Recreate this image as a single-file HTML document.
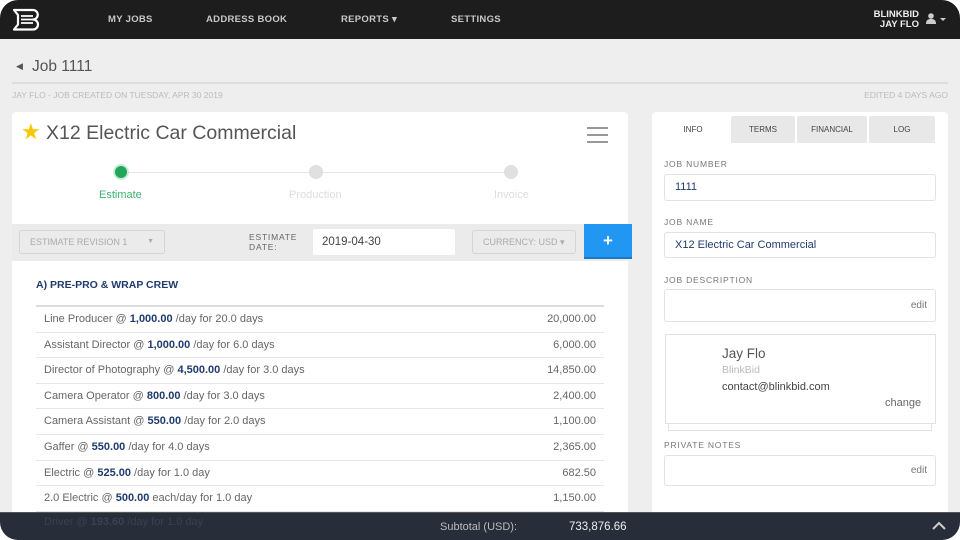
<!DOCTYPE html>
<html><head><meta charset="utf-8"><style>
*{margin:0;padding:0;box-sizing:border-box}
body{width:960px;height:540px;overflow:hidden;background:#fff;font-family:"Liberation Sans",sans-serif;position:relative}
.a{position:absolute}
#page{position:absolute;left:0;top:0;width:960px;height:540px;background:#eeeeee;border-radius:18px;overflow:hidden}
#top{left:0;top:0;width:960px;height:39px;background:#1d1d1d}
.nav{color:#c8c8c8;font-size:9.5px;font-weight:bold;letter-spacing:.3px;top:14px}
.lbl{font-size:8.5px;color:#777;letter-spacing:.8px}
.inp{background:#fff;border:1px solid #e2e2e2;border-radius:3px}
.row{left:36px;width:568px;height:25.6px;border-bottom:1px solid #e6e6e6;font-size:11px;color:#666;line-height:25px;padding-left:8px}
.row b{color:#1f3b6e}
.row span{position:absolute;right:8px}
.tab{top:116px;height:27px;background:#e8e8e8;font-size:8px;color:#444;text-align:center;line-height:27px;border-radius:2px 2px 0 0}
</style></head><body>
<div id="page">
<div class="a" id="top"></div>
<svg class="a" style="left:12px;top:8px" width="28" height="24" viewBox="0 0 28 24"><path d="M2 2h19a4.5 4.5 0 0 1 0 9.5a4.5 4.5 0 0 1 0 10H2l4-5V7z" fill="none" stroke="#fff" stroke-width="2.2" stroke-linejoin="round"/><path d="M9 8h12M9 11.5h12M9 15h12" stroke="#fff" stroke-width="1.8"/></svg>
<div class="a nav" style="left:108px">MY JOBS</div>
<div class="a nav" style="left:206px">ADDRESS BOOK</div>
<div class="a nav" style="left:341px">REPORTS ▾</div>
<div class="a nav" style="left:451px">SETTINGS</div>
<div class="a" style="right:41px;top:10px;color:#eee;font-size:9.5px;font-weight:bold;text-align:right;line-height:10px">BLINKBID<br>JAY FLO</div>
<svg class="a" style="left:926px;top:13px" width="22" height="12" viewBox="0 0 22 12"><circle cx="5" cy="3" r="2.8" fill="#ccc"/><path d="M0 11c0-4 2-5 5-5s5 1 5 5z" fill="#ccc"/><path d="M14 5h6l-3 3z" fill="#ccc"/></svg>

<div class="a" style="left:16px;top:61px;font-size:9px;color:#555">◀</div>
<div class="a" style="left:32px;top:58px;font-size:15.5px;color:#555">Job 1111</div>
<div class="a" style="left:12px;top:82px;width:936px;height:2px;background:#ddd"></div>
<div class="a" style="left:12px;top:90px;font-size:8.5px;color:#bbb">JAY FLO - JOB CREATED ON TUESDAY, APR 30 2019</div>
<div class="a" style="right:12px;top:90px;font-size:8.5px;color:#bbb">EDITED 4 DAYS AGO</div>

<div class="a" style="left:12px;top:112px;width:616px;height:420px;background:#fff;border-radius:4px"></div>
<div class="a" style="left:21px;top:119px;font-size:22px;color:#f5c800">★</div>
<div class="a" style="left:46px;top:122px;font-size:19.5px;color:#555">X12 Electric Car Commercial</div>
<div class="a" style="left:587px;top:127px;width:21px;height:2px;background:#999;box-shadow:0 7px 0 #999,0 14px 0 #999"></div>
<div class="a" style="left:121px;top:172px;width:390px;height:1px;background:#e6e6e6"></div>
<div class="a" style="left:113px;top:164px;width:16px;height:16px;border-radius:50%;background:#22a75a;border:2px solid #c9eed8"></div>
<div class="a" style="left:309px;top:165px;width:14px;height:14px;border-radius:50%;background:#e0e0e0"></div>
<div class="a" style="left:504px;top:165px;width:14px;height:14px;border-radius:50%;background:#e0e0e0"></div>
<div class="a" style="left:99px;top:189px;font-size:11px;color:#3cb371">Estimate</div>
<div class="a" style="left:289px;top:189px;font-size:11px;color:#ddd">Production</div>
<div class="a" style="left:494px;top:189px;font-size:11px;color:#ddd">Invoice</div>

<div class="a" style="left:12px;top:224px;width:616px;height:37px;background:#ebebeb"></div>
<div class="a" style="left:19px;top:230px;width:146px;height:24px;border:1px solid #d4d4d4;border-radius:3px;font-size:9px;color:#aaa;line-height:22px;padding-left:10px">ESTIMATE REVISION 1<span style="position:absolute;right:10px;font-size:7px">▼</span></div>
<div class="a" style="left:249px;top:232px;font-size:8.5px;color:#666;letter-spacing:.8px;line-height:10px">ESTIMATE<br>DATE:</div>
<div class="a" style="left:313px;top:229px;width:142px;height:26px;background:#fff;border-radius:2px;font-size:11.5px;color:#444;line-height:26px;padding-left:9px">2019-04-30</div>
<div class="a" style="left:472px;top:230px;width:104px;height:24px;border:1px solid #d4d4d4;border-radius:3px;font-size:9px;color:#aaa;line-height:22px;padding-left:10px">CURRENCY: USD ▾</div>
<div class="a" style="left:584px;top:224px;width:48px;height:35px;background:#2196f3;border-bottom:2px solid #1a78c8;color:#fff;font-size:17px;font-weight:bold;text-align:center;line-height:33px">+</div>

<div class="a" style="left:36px;top:279px;font-size:10.5px;font-weight:bold;color:#1f3b6e">A) PRE-PRO &amp; WRAP CREW</div>
<div class="a" style="left:36px;top:305px;width:568px;height:2px;background:#ddd"></div>
<div class="a row" style="top:307px">Line Producer @ <b>1,000.00</b> /day for 20.0 days<span>20,000.00</span></div>
<div class="a row" style="top:332.6px">Assistant Director @ <b>1,000.00</b> /day for 6.0 days<span>6,000.00</span></div>
<div class="a row" style="top:358.2px">Director of Photography @ <b>4,500.00</b> /day for 3.0 days<span>14,850.00</span></div>
<div class="a row" style="top:383.8px">Camera Operator @ <b>800.00</b> /day for 3.0 days<span>2,400.00</span></div>
<div class="a row" style="top:409.4px">Camera Assistant @ <b>550.00</b> /day for 2.0 days<span>1,100.00</span></div>
<div class="a row" style="top:435px">Gaffer @ <b>550.00</b> /day for 4.0 days<span>2,365.00</span></div>
<div class="a row" style="top:460.6px">Electric @ <b>525.00</b> /day for 1.0 day<span>682.50</span></div>
<div class="a row" style="top:486.2px">2.0 Electric @ <b>500.00</b> each/day for 1.0 day<span>1,150.00</span></div>

<div class="a" style="left:652px;top:112px;width:296px;height:420px;background:#fff;border-radius:4px"></div>
<div class="a tab" style="left:656px;width:74px;background:#fff">INFO</div>
<div class="a tab" style="left:731px;width:64px">TERMS</div>
<div class="a tab" style="left:797px;width:70px">FINANCIAL</div>
<div class="a tab" style="left:869px;width:66px">LOG</div>
<div class="a lbl" style="left:664px;top:159px">JOB NUMBER</div>
<div class="a inp" style="left:664px;top:174px;width:272px;height:27px;font-size:11px;color:#1f3b6e;line-height:25px;padding-left:10px">1111</div>
<div class="a lbl" style="left:664px;top:217px">JOB NAME</div>
<div class="a inp" style="left:664px;top:232px;width:272px;height:26px;font-size:11px;color:#1f3b6e;line-height:24px;padding-left:10px">X12 Electric Car Commercial</div>
<div class="a lbl" style="left:664px;top:275px">JOB DESCRIPTION</div>
<div class="a inp" style="left:664px;top:289px;width:272px;height:33px;font-size:10px;color:#777;line-height:31px;text-align:right;padding-right:8px">edit</div>
<div class="a" style="left:668px;top:420px;width:264px;height:11px;border:1px solid #e2e2e2;border-top:0"></div>
<div class="a" style="left:665px;top:334px;width:271px;height:90px;background:#fff;border:1px solid #e2e2e2"></div>
<div class="a" style="left:722px;top:346px;font-size:13.5px;color:#555">Jay Flo</div>
<div class="a" style="left:722px;top:364px;font-size:10.5px;color:#bbb">BlinkBid</div>
<div class="a" style="left:722px;top:381px;font-size:11px;color:#444">contact@blinkbid.com</div>
<div class="a" style="left:885px;top:397px;font-size:11px;color:#666">change</div>
<div class="a lbl" style="left:664px;top:440px">PRIVATE NOTES</div>
<div class="a inp" style="left:664px;top:455px;width:272px;height:31px;font-size:10px;color:#777;line-height:29px;text-align:right;padding-right:8px">edit</div>

<div class="a" style="left:0;top:512px;width:960px;height:28px;background:#272d39;border-top:1px solid #555"></div>
<div class="a" style="left:44px;top:516px;font-size:11px;color:#3a4150">Driver @ <b>193.60</b> /day for 1.0 day</div>
<div class="a" style="left:440px;top:521px;font-size:11px;color:#bbb">Subtotal (USD):</div>
<div class="a" style="left:569px;top:521px;font-size:11.5px;color:#eee">733,876.66</div>
<svg class="a" style="left:932px;top:521px" width="14" height="10" viewBox="0 0 14 10"><path d="M1 8l6-6 6 6" fill="none" stroke="#ccc" stroke-width="2"/></svg>
</div>
</body></html>
